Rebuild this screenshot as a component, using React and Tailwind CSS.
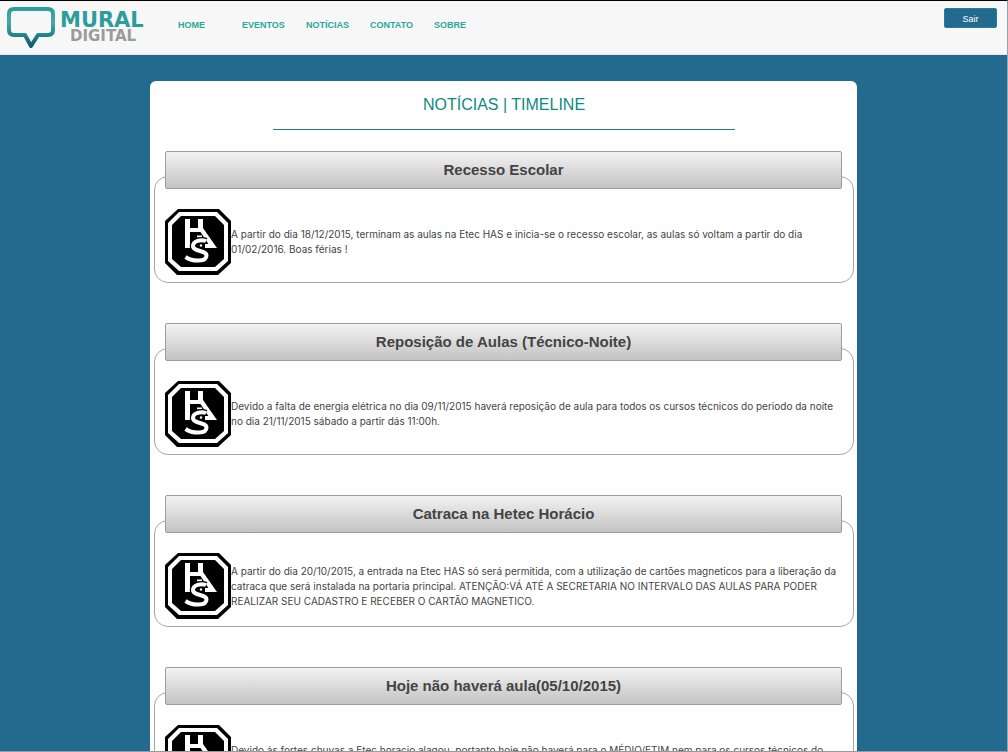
const links = ["HOME", "EVENTOS", "NOTÍCIAS", "CONTATO", "SOBRE"];

const news = [
  {
    title: "Recesso Escolar",
    text: "A partir do dia 18/12/2015, terminam as aulas na Etec HAS e inicia-se o recesso escolar, as aulas só voltam a partir do dia 01/02/2016. Boas férias !",
  },
  {
    title: "Reposição de Aulas (Técnico-Noite)",
    text: "Devido a falta de energia elétrica no dia 09/11/2015 haverá reposição de aula para todos os cursos técnicos do periodo da noite no dia 21/11/2015 sábado a partir dás 11:00h.",
  },
  {
    title: "Catraca na Hetec Horácio",
    text: "A partir do dia 20/10/2015, a entrada na Etec HAS só será permitida, com a utilização de cartões magneticos para a liberação da catraca que será instalada na portaria principal. ATENÇÃO:VÁ ATÉ A SECRETARIA NO INTERVALO DAS AULAS PARA PODER REALIZAR SEU CADASTRO E RECEBER O CARTÃO MAGNETICO.",
  },
  {
    title: "Hoje não haverá aula(05/10/2015)",
    text: "Devido ás fortes chuvas a Etec horacio alagou, portanto hoje não haverá para o MÉDIO/ETIM nem para os cursos técnicos do periodo da noite.",
  },
];

function Bubble() {
  return (
    <svg viewBox="0 0 50 43" className="h-[43px] w-[50px] shrink-0" aria-hidden="true">
      <defs>
        <linearGradient id="teal" x1="0" y1="0" x2="0" y2="1">
          <stop offset="0" stopColor="#2f9c9c" />
          <stop offset="0.35" stopColor="#48aaa6" />
          <stop offset="0.65" stopColor="#268b93" />
          <stop offset="1" stopColor="#0d5a6b" />
        </linearGradient>
      </defs>
      <path
        d="M8 3H42Q47 3 47 8V24Q47 29 42 29H32L25 40L19 29H8Q3 29 3 24V8Q3 3 8 3Z"
        fill="none"
        stroke="url(#teal)"
        strokeWidth="4"
        strokeLinejoin="round"
      />
    </svg>
  );
}

function Badge() {
  return (
    <svg viewBox="0 0 66 66" className="size-[66px] shrink-0" aria-hidden="true">
      <path d="M13 0H54L66 12V54L53 66H12L0 54V12Z" fill="#000" />
      <path d="M14 3H52L63 14V52L52 62H14L3 52V14Z" fill="#fff" />
      <path d="M16 7H50L59 16V50L50 58H16L7 50V16Z" fill="#000" />
      <g fill="#fff">
        <path d="M20 10H25V19H33V10H38V19L52 39H46L35.5 23H25V39H20Z" />
        <path d="M32 26.5H37V28.5H32Z" />
        <path d="M40 35H48L51 39H40Z" />
      </g>
      <path
        d="M41 32C36 30 28 32 28 37C28 43 41.500 41 41.500 46.500C41.500 53 28 53 20.500 48"
        fill="none"
        stroke="#000"
        strokeWidth="6.500"
      />
      <path
        d="M41 32C36 30 28 32 28 37C28 43 41.500 41 41.500 46.500C41.500 53 28 53 20.500 48"
        fill="none"
        stroke="#fff"
        strokeWidth="4"
      />
      <circle cx="36" cy="36.500" r="1.200" fill="#fff" />
    </svg>
  );
}

function NewsItem({ title, text }) {
  return (
    <article className="rounded-[14px] border border-[#a5a5a5] pr-[11px] pb-[7px] pl-[10px]">
      <h2 className="-mt-[26px] flex h-[38px] items-center justify-center rounded-xs border border-[#9c9c9c] bg-linear-to-b from-[#f3f3f3] to-[#c3c3c3] text-[15px] font-bold text-[#444]">
        {title}
      </h2>
      <div className="mt-5 flex items-center">
        <Badge />
        <p className="font-['Inter','Liberation_Sans',sans-serif] text-[10px] leading-[15px] text-[#444]">{text}</p>
      </div>
    </article>
  );
}

export default function App() {
  return (
    <div className="flex h-screen flex-col overflow-hidden border-t border-r border-b border-t-black border-r-[#8fa3b0] border-b-[#999] bg-[#236b8e] font-['Liberation_Sans',Arial,sans-serif]">
      <header className="flex h-[54px] shrink-0 items-start border-b border-[#dcebf3] bg-[#f7f7f7] pr-[10px] pl-[6px]">
        <a href="#" className="mt-[5px] flex w-[172px] shrink-0 gap-1" aria-label="Mural Digital">
          <Bubble />
          <span className="mt-[5px] flex flex-col font-['DejaVu_Sans',sans-serif] font-bold">
            <span className="text-[21px] leading-[18px] text-[#2f9c9c]">MURAL</span>
            <span className="pl-[10px] text-[15px] leading-[15px] text-[#9b9b9b]">DIGITAL</span>
          </span>
        </a>
        <nav className="mt-[18px] flex">
          {links.map((link) => (
            <a key={link} href="#" className="w-16 text-[9px] leading-3 font-bold text-[#2ba89c]">
              {link}
            </a>
          ))}
        </nav>
        <button
          type="button"
          className="mt-[7px] ml-auto h-5 w-[53px] rounded-xs border border-[#2a7a9a] bg-[#236b8e] pt-[3px] text-[9px] leading-[15px] text-white"
        >
          Sair
        </button>
      </header>

      <main className="mx-auto mt-[26px] w-full max-w-[707px] shrink-0 rounded-md bg-white pt-[14px] pr-[3px] pb-10 pl-1">
        <h1 className="text-center text-base leading-5 text-[#0b8c80]">NOTÍCIAS | TIMELINE</h1>
        <hr className="mx-auto mt-[14px] w-[66%] border-t border-[#1f7d90]" />
        <div className="mt-[46px] flex flex-col gap-[65px]">
          {news.map((item) => (
            <NewsItem key={item.title} {...item} />
          ))}
        </div>
      </main>
    </div>
  );
}
